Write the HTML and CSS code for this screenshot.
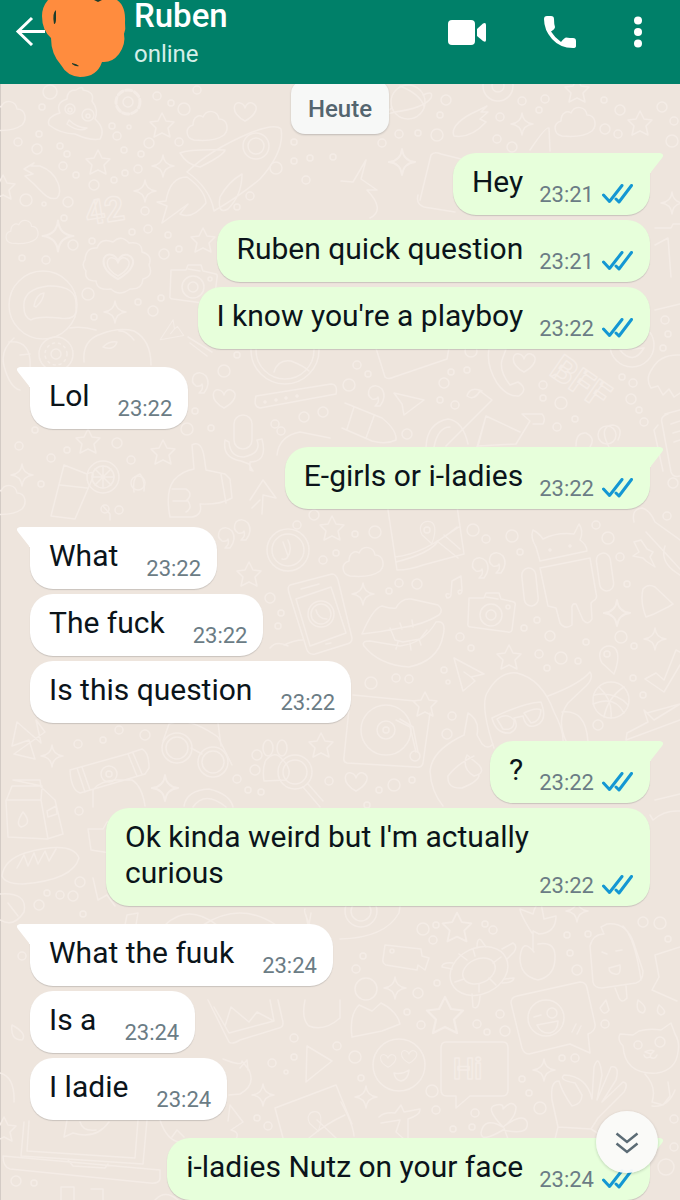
FILE: index.html
```html
<!DOCTYPE html>
<html lang="de">
<head>
	<meta charset="UTF-8">
	<meta name="viewport" content="width=device-width, initial-scale=1">
	<title>Chat</title>

	<link rel="stylesheet" href="styles.css">
</head>
<body>
	<svg class="sprite" aria-hidden="true">
		<defs>
			<symbol id="ticks" viewBox="0 0 31 20">
				<path d="M1.500 11L7.500 17.500L20 1.500M14 15L17 18L29.500 1.500" fill="none" stroke="currentColor" stroke-width="3" stroke-linejoin="round" stroke-linecap="round"/>
			</symbol>
			<path id="star" d="M0-12L4-4L12-3L6 3L8 12L0 8L-8 12L-6 3L-12-3L-4-4Z"/>
			<path id="spark" d="M0-11Q1-1 11 0Q1 1 0 11Q-1 1-11 0Q-1-1 0-11Z"/>
			<path id="cloud" d="M-13 14C-22 12-22 1-14-1C-14-9-8-12-4-9C0-18 11-15 12-7C21-7 22 4 17 9C9 15-2 15-13 14Z"/>
			<path id="heart" d="M0 9C-16 0-11-11-5-9Q-1-8 0-4Q2-10 7-9C15-6 11 3 0 9Z"/>
			<path id="plane" d="M-11-16L19 0L6 3L10 7L-2 17ZM6 3L-1-2"/>
			<g id="camera">
				<path d="M-22-15L-7-15L-5-20H8L10-14L23-11Q25-10 24-7L21 17Q20 20 17 19L-20 14Q-24 14-23 10L-22-15Z"/>
				<path d="M-5-16L7-14"/>
				<circle r="11" cx="0" cy="2"/><circle r="5" cx="0" cy="2"/><circle r="2" cx="17" cy="-6"/>
			</g>
			<path id="comma" d="M5 11Q12 2 7-6Q1-12-5-7Q-9 0-3 4Q2 5 3 2Q5 7 0 11Z"/>
			<path id="pin" d="M6 16L-6 5C-12-6-5-12 1-12C10-12 13-2 6 16Z"/>
			<g id="dots">
				<circle r="4" cx="0" cy="0"/><circle r="2" cx="14" cy="9"/><circle r="3" cx="22" cy="-6"/>
			</g>
		</defs>
	</svg>

	<div class="app">
		<header class="topbar">
			<button class="back" aria-label="Zurück">
				<svg width="30" height="30" viewBox="0 0 30 30" fill="none" stroke="currentColor" stroke-width="3"><path d="M30 15.500H3M17 2L3 15.500L17 29"/></svg>
			</button>
			<svg class="avatar" width="84" height="78" viewBox="0 0 84 78" aria-hidden="true">
				<path fill="#ff8c3e" d="M6 0H75Q84 6 83 23Q84 29 82 34Q84 44 77 54Q70 63 60 62Q55 77 38 77Q25 76 19 65Q9 54 9 38Q0 30 0 16Q0 7 6 0Z"/>
				<path fill="#1d3c2b" d="M14 10Q10 13 12 24Q14 24 14 19ZM52 0L56 2L60 0ZM30 64Q34 67 37 66Q35 64 30 63Z"/>
			</svg>
			<div class="contact">
				<h1 class="contact-name">Ruben</h1>
				<p class="contact-status">online</p>
			</div>
			<nav class="actions">
				<button class="action" aria-label="Videoanruf">
					<svg width="40" height="32" viewBox="0 0 40 32"><rect x="1" y="4" width="27" height="25" rx="4"/><path d="M30 13L36 7.500Q39 6 39 9V24Q39 27 36 25L30 20Z"/></svg>
				</button>
				<button class="action" aria-label="Anrufen">
					<svg width="34" height="34" viewBox="0 0 34 34"><path d="M4 1H8Q11 1 11 4Q11 9 12 12Q12 14 8 16.500Q12 23 18 27Q21 23 23 22.500Q27 23 30 23Q33 23 33 26V31Q33 33 30 33Q17 33 9 24Q1 15 1 4Q1 1 4 1Z"/></svg>
				</button>
				<button class="action" aria-label="Mehr">
					<svg width="10" height="32" viewBox="0 0 10 32"><circle cx="5" cy="4.500" r="4"/><circle cx="5" cy="16" r="4"/><circle cx="5" cy="27.500" r="4"/></svg>
				</button>
			</nav>
		</header>

		<main class="chat">
			<svg class="wallpaper" viewBox="0 84 680 1116" preserveAspectRatio="xMidYMin slice" aria-hidden="true">
				<!-- clouds -->
				<use href="#cloud" x="207" y="126"/><use href="#cloud" x="5" y="116"/><use href="#cloud" x="575" y="122"/>
				<use href="#cloud" x="363" y="562"/><use href="#cloud" transform="translate(22 232) scale(.8)"/>
				<use href="#cloud" x="5" y="500"/>

				<!-- stars -->
				<use href="#star" x="162" y="125"/><use href="#star" x="98" y="162"/><use href="#star" x="203" y="240"/>
				<use href="#star" x="640" y="123"/><use href="#star" x="577" y="90"/><use href="#star" x="3" y="187"/>
				<use href="#star" x="88" y="441"/><use href="#star" x="163" y="452"/><use href="#star" x="332" y="528"/>
				<use href="#star" x="249" y="574"/><use href="#star" x="509" y="657"/><use href="#star" x="425" y="704"/>
				<use href="#star" x="321" y="745"/><use href="#star" transform="translate(457 927) scale(1.200)"/>
				<use href="#star" transform="translate(445 1015) scale(1.500)"/><use href="#star" x="4" y="1129"/>

				<!-- sparkles -->
				<use href="#spark" x="163" y="166"/><use href="#spark" x="145" y="191"/><use href="#spark" transform="translate(58 236) scale(1.400)"/>
				<use href="#spark" x="115" y="312"/><use href="#spark" x="522" y="124"/><use href="#spark" transform="translate(402 162) scale(1.200)"/>
				<use href="#spark" x="22" y="475"/><use href="#spark" x="363" y="594"/><use href="#spark" transform="translate(617 613) scale(1.200)"/>
				<use href="#spark" x="655" y="639"/><use href="#spark" x="52" y="756"/><use href="#spark" transform="translate(165 788) scale(1.200)"/>
				<use href="#spark" x="395" y="988"/><use href="#spark" x="544" y="1070"/><use href="#spark" x="366" y="1097"/>
				<use href="#spark" x="577" y="911"/><use href="#spark" x="263" y="1095"/><use href="#spark" x="672" y="203"/>

				<!-- smiling heap, gear, nut -->
				<path d="M67 99Q67 90 76 90Q83 85 83 90Q95 92 92 101Q99 110 95 119Q106 129 100 139Q90 141 75 134Q61 134 49 125Q46 117 60 113Q55 103 67 99ZM69 120Q77 128 87 128Q79 133 67 124Z"/>
				<circle cx="70" cy="109" r="5"/><circle cx="88" cy="115" r="6"/><circle cx="70" cy="110" r="2"/><circle cx="88" cy="116" r="2"/>
				<circle cx="128" cy="102" r="12" stroke-width="3" stroke-dasharray="6 3"/><circle cx="128" cy="102" r="5"/>
				<path d="M24 169L34 163L31 166L40 166C59 173 63 193 57 198C49 201 43 193 34 184L25 176L33 174ZM454 136C450 127 463 117 477 111L487 106L481 112L488 112L480 119L486 122C476 133 466 138 454 136Z"/>
				<use href="#heart" x="245" y="112"/>

				<!-- rocket -->
				<path d="M187 172Q210 150 250 133Q275 123 281 129Q285 151 260 179Q240 196 214 211Q210 188 187 172ZM180 153Q190 149 225 150Q224 155 200 167Q187 165 180 153ZM242 174Q228 182 220 197Q217 215 228 209Q242 195 242 174ZM166 201Q170 177 187 177Q205 190 206 203Q192 220 180 214L188 204L162 223L167 206L157 202L166 201"/>
				<circle cx="256" cy="146" r="13"/><circle cx="256" cy="146" r="8"/>
				<text x="85" y="222" font-size="34" transform="rotate(-9 107 210)">42</text>

				<!-- planet and moon -->
				<circle cx="408" cy="102" r="17"/><path d="M392 108Q378 117 395 112Q424 108 431 98Q434 90 423 95M400 86Q420 94 424 106"/>
				<circle cx="498" cy="86" r="15"/><circle cx="498" cy="86" r="6"/>
				<path d="M341 181L353 182L366 160L361 179L377 190L367 190Q386 210 370 218M420 200L431 155Q434 151 441 154L465 160M418 195Q415 207 430 208L455 212M530 150Q546 126 549 128L550 151"/>

				<!-- badge -->
				<path d="M85 260Q86 247 97 248Q101 237 113 242Q121 234 129 243Q142 241 142 252Q153 255 149 265Q154 276 143 279Q142 290 130 289Q119 297 111 289Q97 291 96 281Q84 281 86 271Q81 265 85 260Z"/>
				<use href="#heart" x="118" y="267"/><use href="#heart" transform="translate(118 267) scale(1.350)"/>
				<use href="#camera" x="193" y="285"/>

				<!-- helmet and cookie -->
				<circle cx="43" cy="305" r="34"/><path d="M24 308Q22 289 48 286Q78 285 76 307Q78 321 59 318Q37 316 31 320Q24 317 24 308ZM34 306Q36 294 44 293Q43 301 36 307ZM14 338Q0 350 4 366Q10 388 20 390M70 328Q82 326 96 330M9 342Q32 340 30 368"/>
				<circle cx="56" cy="354" r="17"/><circle cx="56" cy="354" r="5"/><circle cx="56" cy="354" r="11" stroke-dasharray="2 4"/>
				<path d="M84 362Q82 340 101 334Q119 327 134 331Q151 340 151 365M103 347Q109 341 117 342Q114 351 103 347M119 331Q126 330 134 340"/>
				<use href="#plane" transform="translate(172 333) rotate(-85) scale(.7)"/>
				<path d="M188 337L212 352M190 343L207 356M20 355L30 354"/>

				<!-- face, tape, correction pen -->
				<circle cx="285" cy="350" r="34"/><circle cx="285" cy="350" r="29"/><path d="M274 372Q278 359 291 361Q304 366 309 371M256 396L331 384Q338 384 336 394L260 408Q253 407 256 396Z"/>
				<circle cx="265" cy="402" r="1"/><circle cx="276" cy="400" r="1"/><circle cx="286" cy="398" r="1"/><circle cx="297" cy="396" r="1"/>
				<use href="#comma" x="199" y="382"/><use href="#heart" x="224" y="399"/><use href="#comma" x="375" y="395"/>
				<path d="M375 345L385 377Q388 380 394 377L447 359L449 348M394 393L424 400L404 415L402 404ZM345 403L382 418Q397 430 396 440Q386 445 372 441L342 428M354 407L347 429M374 416L366 438"/>
				<path d="M489 349Q486 365 497 383Q507 397 519 396Q529 389 518 382L510 385Q499 371 502 360L506 349Z"/>
				<use href="#heart" x="524" y="363"/>
				<text x="548" y="374" font-size="36" transform="rotate(35 548 374)">BFF</text>
				<circle cx="632" cy="345" r="22"/><path d="M620 350Q633 366 644 348ZM680 355Q660 354 652 369Q645 379 651 388L658 386L663 395L669 389L674 397L680 393"/>

				<!-- bicycle -->
				<path d="M477 447L486 416L520 432M426 447Q427 423 448 419Q463 421 468 444M434 447Q438 427 450 427M446 446L492 400L480 391Q474 401 467 396Q470 386 482 391M486 416L478 446L516 444L530 421L522 414H542Q546 418 543 424L533 424M576 446Q576 432 586 433Q596 438 590 447M609 447Q598 426 613 425Q624 427 618 440"/>
				<path d="M665 414L680 410M668 414Q660 416 662 423L671 472Q673 478 680 476M658 425L654 430L663 471M671 424L680 421M673 433L680 431M674 442L680 440"/>

				<!-- microphone, drink, thumb -->
				<rect x="234" y="415" width="18" height="34" rx="9"/><path d="M229 442Q230 457 244 457Q262 453 257 440L262 439Q268 462 250 462V470L253 471L249 464L241 461Q222 458 225 440Z"/>
				<path d="M64 465L87 474Q94 470 93 477L75 519L51 516ZM60 485L87 488M103 506L110 514L110 520M134 492Q132 476 140 474Q145 480 144 491M170 517Q165 492 174 480Q182 471 194 469L192 445Q201 440 204 456L206 470L225 474L230 479L232 498Q220 505 200 504Q203 515 192 517ZM221 474L226 503M172 489H186Q194 494 186 501H173M174 501H188Q193 508 186 512"/>
				<circle cx="103" cy="477" r="16"/><circle cx="103" cy="477" r="11"/><path d="M103 466V488M92 477H114M95 469L111 485M111 469L95 485"/>
				<circle cx="138" cy="483" r="7"/><path d="M250 500L263 480L276 498L263 495L262 514M277 455Q279 436 300 432L330 438"/>

				<!-- clock and phone -->
				<circle cx="288" cy="550" r="21"/><circle cx="288" cy="550" r="16"/><path d="M283 542L288 556Q287 560 282 559M288 540Q293 550 287 558M252 508L260 500"/>
				<use href="#comma" x="225" y="537"/><use href="#comma" x="241" y="529"/>
				<path d="M290 585L332 574Q336 574 338 580L352 638Q352 643 347 644L315 654Q309 655 307 650L289 593Q287 587 290 585ZM296 599L331 587L346 633L310 646ZM301 589L319 584M326 644L331 643"/>
				<circle cx="321" cy="614" r="13"/><circle cx="321" cy="614" r="10"/><path d="M316 610Q318 619 327 619M303 640Q295 640 284 645M270 648Q276 640 288 646"/>

				<!-- map and lips -->
				<path d="M387 503L397 570Q410 570 423 565L464 554L457 506M395 557Q424 554 457 527M396 562Q431 553 438 541L459 527M437 541L458 558M444 535L460 549"/>
				<use href="#pin" transform="translate(427 531) scale(.8)"/><circle cx="427" cy="530" r="3"/>
				<path d="M362 634Q373 608 382 606Q391 609 396 608Q401 598 411 599L438 605Q444 610 439 615Q423 625 400 628Q381 632 362 634ZM364 646Q361 641 370 641L400 646Q424 643 436 622Q447 620 443 636Q438 661 409 667Q379 665 364 646ZM390 628L395 640L403 642L420 639L427 630M400 623L402 629M412 620L413 627M398 642L396 649M410 643L411 650M419 639L421 645"/>
				<path d="M452 581L461 576L462 590M452 581L451 594M449 594Q444 593 447 598Q451 598 451 594M462 590Q456 590 459 594Q462 594 462 590"/>
				<use href="#comma" x="479" y="567"/><use href="#comma" x="496" y="562"/>
				<use href="#camera" x="491" y="613"/><use href="#plane" x="465" y="674"/>

				<!-- robot -->
				<path d="M540 561L536 547Q530 537 533 530Q539 533 543 539Q557 532 574 534L579 524Q584 531 580 540Q587 545 587 551ZM540 568L590 558L596 593Q598 599 593 601L591 603L592 619Q588 626 583 620L576 604Q571 603 572 610L572 625Q565 630 560 623L556 608L548 606Z"/>
				<rect x="523" y="568" width="14" height="38" rx="7" transform="rotate(-6 530 587)"/><rect x="598" y="553" width="14" height="38" rx="7" transform="rotate(-8 605 572)"/>
				<circle cx="550" cy="550" r="1"/><circle cx="570" cy="546" r="1"/>
				<path d="M634 542L641 540L647 549L653 552L650 557L655 567L646 561L643 558L633 556L639 552ZM643 589Q648 583 655 587L673 604L668 607L654 614L646 617Q640 602 643 589ZM634 522Q631 509 642 508Q650 510 655 522L680 540M646 532L680 569M665 546Q659 563 680 575"/>
				<use href="#pin" x="608" y="658"/><circle cx="607" cy="654" r="3"/>
				<path d="M645 679L656 673L664 680L676 650L680 652M645 679L664 692L680 665"/>

				<!-- record player, hooded figure, ball -->
				<path d="M353 695L415 701M430 713L423 763Q422 768 416 767L347 763Q343 762 344 757L350 699"/>
				<circle cx="386" cy="730" r="25"/><circle cx="386" cy="730" r="9"/><circle cx="386" cy="730" r="3"/><path d="M396 720L410 727L416 752M400 719L413 727L418 752"/><circle cx="415" cy="756" r="5"/>
				<path d="M494 748Q480 706 487 693Q499 671 517 673Q542 679 554 712Q564 731 563 742M492 718Q523 703 541 702Q548 720 537 725Q526 730 523 716L514 718Q520 728 510 733Q496 734 492 718ZM497 719Q507 712 514 720Q515 731 503 729ZM524 713Q536 707 541 710Q540 722 531 723ZM548 696Q580 684 590 672Q594 678 586 686L568 703Q556 719 566 741M562 712Q586 709 588 742M468 713Q480 720 477 735L482 744Q488 750 493 744M468 713L464 735Q432 750 430 771Q431 791 443 806M474 756Q457 764 448 776Q447 789 462 788Q479 781 479 775M467 755Q461 768 474 776Q486 773 479 765Z"/>
				<circle cx="611" cy="700" r="18"/><path d="M599 687Q613 700 611 718M624 687Q608 697 604 717M594 695Q615 691 628 705M593 704Q615 695 624 713M644 710L654 720L680 704M644 710L648 722L627 733L626 740L680 720M647 713L680 704"/>
				<use href="#heart" x="356" y="782"/>

				<!-- camera roll, milk carton, glasses, paw -->
				<path d="M70 770L127 754L142 749Q149 752 149 768L145 774L80 793Q71 790 70 770ZM77 768L85 792M82 767L90 790M128 754L137 776M133 753L142 774M93 807V790Q99 781 116 780H132Q142 786 145 806M88 829H103L107 822L131 821M88 829L91 850L110 853"/>
				<circle cx="109" cy="774" r="8"/><circle cx="109" cy="774" r="3"/>
				<path d="M13 780H40L41 787L55 800L63 834L47 839L8 837L6 801L12 786H42ZM6 800H41L48 839M41 800L42 787M23 812Q33 824 21 827Q15 824 23 812ZM47 811L56 806L57 814L48 817ZM17 722L41 743L36 720L45 732L14 754L35 759L29 740L12 746Z"/>
				<circle cx="177" cy="748" r="15"/><circle cx="177" cy="748" r="11"/><circle cx="213" cy="762" r="15"/><circle cx="213" cy="762" r="11"/><path d="M191 748L202 754M163 741L169 724Q187 715 218 737L232 765M218 723L221 746"/>
				<path d="M266 760Q275 750 282 759Q294 771 286 780L264 781Q262 768 266 760ZM303 787L320 807M308 784L323 801"/>
				<circle cx="295" cy="772" r="17"/><circle cx="295" cy="772" r="12"/><ellipse cx="268" cy="748" rx="5" ry="8"/><ellipse cx="282" cy="748" rx="5" ry="8"/><circle cx="257" cy="755" r="5"/><circle cx="255" cy="770" r="5"/>
				<path d="M184 806Q187 790 209 789Q230 794 233 807M193 807Q205 790 226 807M2 876Q4 860 25 853Q72 840 79 858Q73 880 23 884Q5 884 2 876ZM17 868L24 855L28 866L34 853L38 864L45 851L49 861L56 849M93 878L98 900L107 895L115 906M0 894Q28 892 24 912Q14 928 0 920M8 903L18 916M125 925L127 915L138 913L136 925M165 925Q188 903 217 925M203 925Q240 901 276 925M306 915L308 925M311 913L309 925M310 925Q303 911 305 909"/>

				<!-- vinyl edge, label, turtle, sprout -->
				<path d="M340 939Q385 938 399 913L400 906M385 945L421 949L422 956L429 958L425 970L418 965L417 970L386 965Q382 963 383 959Z"/>
				<circle cx="361" cy="911" r="16"/><circle cx="361" cy="911" r="10"/><circle cx="392" cy="951" r="2"/>
				<ellipse cx="479" cy="971" rx="30" ry="23" transform="rotate(-25 479 971)"/><ellipse cx="479" cy="971" rx="17" ry="12" transform="rotate(-25 479 971)"/>
				<path d="M477 948Q477 937 481 940L486 947M502 949L513 943Q518 946 514 952L507 959M452 969L442 967Q442 962 453 963M504 979L514 978Q513 983 502 983M472 994L473 1007Q479 1011 480 996M467 960L459 954M475 956L473 949M493 963L501 957M489 978L496 985M479 984L479 992M464 979L455 982"/>
				<path d="M532 933Q520 914 520 909L533 914Q536 902 541 903L544 919L556 916Q556 933 539 934L533 931V951M534 952Q522 937 520 958Q520 976 538 980Q556 976 555 955Q554 941 538 944"/>

				<!-- ice cream, sticker bubble, greeting -->
				<path d="M593 982L590 946Q593 934 604 934L601 927L607 924Q627 922 634 944L643 971Q643 981 636 983L602 988Q594 988 593 982ZM623 926Q635 938 641 980M615 988L619 998Q622 1004 627 998L626 986M609 968L620 965Q621 976 615 974Q609 973 609 968M602 952L607 954M616 951L622 950"/>
				<path d="M517 996L580 982Q586 982 587 988L595 1024Q596 1031 588 1034L590 1053L570 1044L529 1054Q524 1054 522 1048L511 1003Q511 997 517 996Z"/><circle cx="546" cy="1018" r="18"/><circle cx="552" cy="1013" r="5"/><path d="M534 1017L541 1015M537 1025L558 1021Q558 1031 550 1033Q541 1034 537 1025M572 1032L576 1024M577 1034L581 1026"/>
				<path d="M446 1042H503Q508 1042 508 1048V1090Q508 1096 502 1096H470L456 1108V1096H447Q441 1096 441 1090V1048Q441 1042 446 1042Z"/><text x="453" y="1079" font-size="30">Hi</text>
				<circle cx="399" cy="1065" r="26"/><use href="#heart" transform="translate(388 1061) scale(.7)"/><use href="#heart" transform="translate(409 1057) scale(.7)"/><path d="M394 1073Q402 1075 409 1070Q408 1080 401 1081Q395 1080 394 1073Z"/>
				<circle cx="366" cy="989" r="11"/><path d="M352 1037Q349 1015 359 1005L372 1011L381 1003Q397 1011 400 1024L382 1031Z"/>

				<!-- panda and hand -->
				<path d="M623 1046Q617 1040 620 1034L633 1035L639 1031Q650 1028 661 1030L671 1023L675 1034Q680 1042 678 1052Q676 1070 657 1073Q625 1075 623 1046ZM645 1074Q657 1087 652 1102L663 1105L670 1096L668 1082M675 1090Q668 1108 652 1106"/><circle cx="638" cy="1045" r="4"/><circle cx="660" cy="1042" r="5"/><path d="M645 1052Q650 1049 654 1051L651 1054ZM651 1054L650 1057Q655 1060 657 1055M650 1057Q645 1059 644 1055"/>
				<path d="M558 1127L552 1100Q550 1081 559 1081Q562 1092 572 1106Q582 1104 582 1095L575 1083Q558 1080 564 1075Q587 1076 592 1099L594 1067Q599 1052 602 1075L597 1100L611 1067Q620 1065 616 1080L602 1102L623 1082Q629 1083 624 1092L598 1118L591 1129ZM558 1127L555 1139M591 1129L599 1134"/>
				<path d="M606 1000L609 1010Q604 1017 600 1008ZM638 1000Q649 1008 643 1013Q635 1012 638 1000M659 1005Q669 1013 661 1015Q655 1013 659 1005M655 955L680 947M655 955L659 977L652 990L677 1001"/>

				<!-- clover, aeroplane, devil, picture, map, laptop -->
				<path d="M503 1127Q484 1107 496 1105Q504 1103 503 1109Q512 1099 516 1107Q516 1118 503 1127Q523 1112 527 1122Q530 1136 503 1130Q481 1143 481 1133Q484 1116 503 1127M504 1128L508 1139M379 1117Q384 1112 395 1113L401 1105L404 1112L420 1109Q421 1115 408 1119L408 1139M381 1123L400 1120L396 1132L404 1139"/>
				<path d="M208 1000L229 1042Q232 1045 240 1040L279 1028Q285 1027 282 1018L278 1000M214 1007L229 1033L274 1021L270 1000M225 1026L231 1007L249 1022L257 1012L272 1020M305 1000Q301 1019 309 1026Q324 1032 340 1018L340 1000M223 1059Q243 1067 242 1061L249 1070Q256 1085 240 1094L229 1095M240 1068L247 1060L248 1070M307 1046L332 1061L322 1069L306 1082ZM275 1108L336 1085L352 1124M275 1108L283 1138M317 1120L336 1138M309 1138Q327 1123 345 1115M12 1025Q28 1034 22 1040Q10 1040 12 1025"/>
				<path d="M24 1122L21 1156L143 1164L147 1120M29 1121L27 1151L135 1158L138 1120M3 1156L160 1170V1178Q160 1184 150 1183L10 1169Q3 1167 3 1156ZM68 1160L73 1166L105 1168L108 1164M67 1120L64 1137L73 1133Q96 1140 109 1122M80 1122Q83 1132 96 1130M61 1187V1200M61 1187H74V1200M91 1189H103V1200M155 1200Q165 1189 178 1200M160 1120Q167 1141 180 1142M172 1137L177 1130L184 1137M228 1121L230 1105L243 1122L231 1130Q240 1132 236 1139"/>
				<use href="#pin" transform="translate(314 1120) scale(.7)"/>
				<path d="M0 1073Q15 1077 14 1102M341 1102Q353 1124 354 1136M655 310L680 304M655 245L668 238L671 277M655 228H671L673 224H680M655 800L680 794M650 815L653 820Q664 810 680 811"/>

				<!-- loose rings -->
				<circle cx="50" cy="92" r="7"/><circle cx="42" cy="107" r="3"/><circle cx="171" cy="103" r="3"/><circle cx="184" cy="109" r="6"/><circle cx="157" cy="96" r="4"/><circle cx="197" cy="90" r="4"/>
				<circle cx="112" cy="126" r="3"/><circle cx="117" cy="136" r="4"/><circle cx="129" cy="127" r="2"/><circle cx="149" cy="143" r="5"/><circle cx="179" cy="142" r="4"/><circle cx="124" cy="150" r="3"/><circle cx="141" cy="154" r="3"/>
				<circle cx="37" cy="149" r="5"/><circle cx="60" cy="146" r="3"/><circle cx="67" cy="154" r="3"/><circle cx="39" cy="134" r="3"/><circle cx="18" cy="142" r="4"/><circle cx="63" cy="166" r="4"/><circle cx="76" cy="175" r="3"/><circle cx="94" cy="185" r="5"/>
				<circle cx="26" cy="200" r="6"/><circle cx="44" cy="204" r="2"/><circle cx="68" cy="202" r="5"/><circle cx="64" cy="218" r="3"/><circle cx="138" cy="169" r="4"/><circle cx="114" cy="180" r="3"/><circle cx="125" cy="173" r="3"/>
				<circle cx="145" cy="211" r="4"/><circle cx="148" cy="229" r="4"/><circle cx="132" cy="232" r="3"/><circle cx="168" cy="235" r="3"/><circle cx="73" cy="245" r="5"/><circle cx="92" cy="241" r="3"/><circle cx="46" cy="260" r="4"/><circle cx="22" cy="258" r="3"/>
				<circle cx="164" cy="254" r="5"/><circle cx="179" cy="249" r="3"/><circle cx="88" cy="294" r="6"/><circle cx="153" cy="311" r="5"/><circle cx="138" cy="302" r="3"/><circle cx="94" cy="317" r="3"/><circle cx="161" cy="298" r="3"/>
				<circle cx="276" cy="168" r="6"/><circle cx="294" cy="161" r="3"/><circle cx="310" cy="158" r="3"/><circle cx="333" cy="157" r="3"/><circle cx="294" cy="142" r="3"/><circle cx="306" cy="180" r="4"/><circle cx="250" cy="196" r="4"/><circle cx="237" cy="207" r="3"/>
				<circle cx="446" cy="100" r="5"/><circle cx="437" cy="135" r="6"/><circle cx="399" cy="134" r="4"/><circle cx="418" cy="133" r="3"/><circle cx="382" cy="143" r="4"/><circle cx="440" cy="115" r="3"/><circle cx="500" cy="117" r="4"/><circle cx="522" cy="101" r="4"/><circle cx="545" cy="99" r="4"/><circle cx="539" cy="110" r="3"/>
				<circle cx="620" cy="110" r="5"/><circle cx="605" cy="129" r="5"/><circle cx="618" cy="134" r="4"/><circle cx="662" cy="107" r="5"/><circle cx="604" cy="100" r="3"/><circle cx="672" cy="141" r="6"/><circle cx="674" cy="121" r="4"/><circle cx="497" cy="139" r="4"/><circle cx="512" cy="147" r="5"/>
				<circle cx="665" cy="320" r="4"/><circle cx="668" cy="334" r="3"/><circle cx="663" cy="348" r="3"/><circle cx="224" cy="371" r="6"/><circle cx="237" cy="355" r="3"/><circle cx="195" cy="411" r="3"/><circle cx="187" cy="429" r="6"/><circle cx="211" cy="428" r="3"/>
				<circle cx="349" cy="385" r="6"/><circle cx="357" cy="365" r="4"/><circle cx="368" cy="374" r="3"/><circle cx="444" cy="383" r="5"/><circle cx="451" cy="372" r="3"/><circle cx="467" cy="370" r="3"/><circle cx="471" cy="351" r="6"/><circle cx="407" cy="434" r="5"/><circle cx="440" cy="400" r="3"/><circle cx="455" cy="405" r="4"/>
				<circle cx="543" cy="385" r="4"/><circle cx="561" cy="403" r="6"/><circle cx="543" cy="398" r="3"/><circle cx="557" cy="427" r="4"/><circle cx="575" cy="419" r="3"/><circle cx="631" cy="399" r="5"/><circle cx="633" cy="383" r="4"/><circle cx="639" cy="410" r="3"/><circle cx="622" cy="377" r="3"/><circle cx="644" cy="422" r="4"/><circle cx="607" cy="435" r="9"/>
				<circle cx="275" cy="424" r="4"/><circle cx="281" cy="431" r="4"/><circle cx="304" cy="417" r="5"/><circle cx="323" cy="412" r="5"/><circle cx="19" cy="446" r="4"/><circle cx="35" cy="430" r="3"/><circle cx="67" cy="450" r="3"/><circle cx="51" cy="458" r="4"/><circle cx="117" cy="443" r="5"/><circle cx="131" cy="460" r="4"/><circle cx="105" cy="509" r="4"/><circle cx="119" cy="510" r="4"/><circle cx="41" cy="484" r="3"/>
				<circle cx="375" cy="532" r="6"/><circle cx="355" cy="534" r="3"/><circle cx="314" cy="515" r="5"/><circle cx="297" cy="525" r="4"/><circle cx="323" cy="560" r="4"/><circle cx="336" cy="553" r="3"/><circle cx="270" cy="598" r="5"/><circle cx="281" cy="613" r="3"/><circle cx="278" cy="626" r="3"/><circle cx="417" cy="584" r="5"/><circle cx="399" cy="583" r="4"/><circle cx="389" cy="591" r="3"/>
				<circle cx="473" cy="530" r="6"/><circle cx="486" cy="539" r="4"/><circle cx="512" cy="536" r="6"/><circle cx="520" cy="552" r="3"/><circle cx="608" cy="538" r="6"/><circle cx="596" cy="525" r="4"/><circle cx="620" cy="557" r="4"/><circle cx="627" cy="584" r="3"/><circle cx="537" cy="620" r="3"/><circle cx="524" cy="628" r="3"/><circle cx="550" cy="636" r="5"/><circle cx="586" cy="642" r="3"/><circle cx="621" cy="637" r="6"/><circle cx="634" cy="646" r="3"/>
				<circle cx="460" cy="637" r="4"/><circle cx="471" cy="648" r="3"/><circle cx="539" cy="654" r="4"/><circle cx="561" cy="658" r="6"/><circle cx="578" cy="661" r="3"/><circle cx="547" cy="668" r="3"/><circle cx="371" cy="683" r="6"/><circle cx="396" cy="678" r="4"/><circle cx="409" cy="679" r="4"/><circle cx="444" cy="670" r="3"/><circle cx="448" cy="682" r="2"/><circle cx="452" cy="716" r="4"/><circle cx="447" cy="734" r="5"/><circle cx="598" cy="725" r="5"/><circle cx="633" cy="678" r="3"/><circle cx="643" cy="695" r="3"/>
				<circle cx="394" cy="785" r="6"/><circle cx="379" cy="790" r="3"/><circle cx="412" cy="780" r="3"/><circle cx="367" cy="805" r="3"/><circle cx="78" cy="744" r="4"/><circle cx="103" cy="740" r="3"/><circle cx="145" cy="735" r="5"/><circle cx="119" cy="730" r="4"/><circle cx="237" cy="779" r="4"/><circle cx="248" cy="790" r="3"/><circle cx="261" cy="792" r="3"/><circle cx="329" cy="781" r="4"/><circle cx="79" cy="811" r="4"/>
				<circle cx="39" cy="905" r="5"/><circle cx="47" cy="893" r="3"/><circle cx="60" cy="895" r="4"/><circle cx="73" cy="896" r="5"/><circle cx="83" cy="914" r="3"/><circle cx="80" cy="882" r="5"/><circle cx="22" cy="956" r="4"/><circle cx="423" cy="929" r="6"/><circle cx="436" cy="925" r="3"/><circle cx="433" cy="940" r="4"/><circle cx="485" cy="924" r="3"/><circle cx="493" cy="930" r="4"/><circle cx="363" cy="956" r="3"/><circle cx="356" cy="969" r="4"/><circle cx="577" cy="970" r="5"/><circle cx="570" cy="953" r="3"/><circle cx="567" cy="935" r="3"/><circle cx="588" cy="934" r="3"/><circle cx="643" cy="922" r="5"/><circle cx="660" cy="923" r="6"/><circle cx="668" cy="939" r="3"/>
				<circle cx="418" cy="993" r="5"/><circle cx="437" cy="983" r="3"/><circle cx="407" cy="1012" r="3"/><circle cx="421" cy="1025" r="4"/><circle cx="477" cy="1024" r="4"/><circle cx="505" cy="1031" r="5"/><circle cx="487" cy="1032" r="3"/><circle cx="500" cy="1014" r="4"/><circle cx="355" cy="1057" r="6"/><circle cx="361" cy="1078" r="3"/><circle cx="432" cy="1091" r="6"/><circle cx="436" cy="1110" r="4"/><circle cx="453" cy="1129" r="3"/><circle cx="475" cy="1113" r="4"/><circle cx="472" cy="1127" r="3"/><circle cx="540" cy="1108" r="6"/><circle cx="529" cy="1093" r="3"/><circle cx="522" cy="1079" r="3"/><circle cx="562" cy="1058" r="3"/><circle cx="575" cy="1058" r="4"/><circle cx="605" cy="1024" r="4"/>
				<use href="#dots" x="272" y="1063"/><circle cx="294" cy="1038" r="4"/><circle cx="337" cy="1046" r="4"/><circle cx="257" cy="1118" r="3"/><circle cx="268" cy="1126" r="4"/><circle cx="16" cy="1181" r="5"/><circle cx="34" cy="1183" r="3"/><circle cx="674" cy="1119" r="4"/><circle cx="674" cy="1147" r="4"/><circle cx="666" cy="1167" r="8"/><circle cx="673" cy="483" r="5"/><circle cx="667" cy="516" r="4"/>
			</svg>

			<div class="thread">
				<div class="date">Heute</div>

				<div class="message sent tail">
					<p class="text">Hey</p>
					<span class="meta"><time>23:21</time><svg class="ticks" role="img" aria-label="Gelesen"><use href="#ticks"/></svg></span>
				</div>
				<div class="message sent">
					<p class="text">Ruben quick question</p>
					<span class="meta"><time>23:21</time><svg class="ticks" role="img" aria-label="Gelesen"><use href="#ticks"/></svg></span>
				</div>
				<div class="message sent">
					<p class="text">I know you're a playboy</p>
					<span class="meta"><time>23:22</time><svg class="ticks" role="img" aria-label="Gelesen"><use href="#ticks"/></svg></span>
				</div>

				<div class="message received tail">
					<p class="text">Lol</p>
					<span class="meta"><time>23:22</time></span>
				</div>

				<div class="message sent tail">
					<p class="text">E-girls or i-ladies</p>
					<span class="meta"><time>23:22</time><svg class="ticks" role="img" aria-label="Gelesen"><use href="#ticks"/></svg></span>
				</div>

				<div class="message received tail">
					<p class="text">What</p>
					<span class="meta"><time>23:22</time></span>
				</div>
				<div class="message received">
					<p class="text">The fuck</p>
					<span class="meta"><time>23:22</time></span>
				</div>
				<div class="message received">
					<p class="text">Is this question</p>
					<span class="meta"><time>23:22</time></span>
				</div>

				<div class="message sent tail">
					<p class="text">?</p>
					<span class="meta"><time>23:22</time><svg class="ticks" role="img" aria-label="Gelesen"><use href="#ticks"/></svg></span>
				</div>
				<div class="message sent long">
					<p class="text">Ok kinda weird but I'm actually curious</p>
					<span class="meta"><time>23:22</time><svg class="ticks" role="img" aria-label="Gelesen"><use href="#ticks"/></svg></span>
				</div>

				<div class="message received tail">
					<p class="text">What the fuuk</p>
					<span class="meta"><time>23:24</time></span>
				</div>
				<div class="message received">
					<p class="text">Is a</p>
					<span class="meta"><time>23:24</time></span>
				</div>
				<div class="message received">
					<p class="text">I ladie</p>
					<span class="meta"><time>23:24</time></span>
				</div>

				<div class="message sent tail">
					<p class="text">i-ladies Nutz on your face</p>
					<span class="meta"><time>23:24</time><svg class="ticks" role="img" aria-label="Gelesen"><use href="#ticks"/></svg></span>
				</div>
			</div>

			<button class="scroll-down" aria-label="Nach unten">
				<svg width="24" height="22" viewBox="0 0 24 22" fill="none" stroke="currentColor" stroke-width="2.500"><path d="M1.500 1.500L12 10L22.500 1.500M1.500 11.500L12 20L22.500 11.500"/></svg>
			</button>
		</main>
	</div>
</body>
</html>
```
FILE: styles.css
```css
* {
	box-sizing: border-box;
}

body {
	margin: 0;
	font-family: Roboto, "Liberation Sans", sans-serif;
	color: #0b141a;
}

button {
	padding: 0;
	border: 0;
	background: none;
	color: inherit;
	cursor: pointer;
}

svg {
	display: block;
}

.sprite {
	position: absolute;
	width: 0;
	height: 0;
}

.app {
	display: flex;
	flex-direction: column;
	height: 100vh;
}

/* Header */
.topbar {
	display: flex;
	align-items: flex-start;
	height: 84px;
	padding: 0 37px 0 15px;
	background-color: #008069;
	color: #fff;
}

.back {
	display: flex;
	align-items: center;
	height: 62px;
}

.avatar {
	margin-left: -3px;
}

.contact {
	flex-grow: 1;
	margin-left: 8px;
}

.contact-name {
	margin: 0 0 8px;
	font-size: 33px;
	font-weight: 500;
	line-height: 32px;
}

.contact-status {
	margin: 0;
	font-size: 24px;
	line-height: 28px;
	color: #d6efe9;
}

.actions {
	display: flex;
	gap: 56px;
	height: 64px;
}

.action {
	display: flex;
	align-items: center;
}

.action svg {
	fill: currentColor;
}

/* Chat */
.chat {
	position: relative;
	flex: 1;
	min-height: 0;
	overflow: hidden;
	background-color: #eee5dd;
	box-shadow: inset 1px 0 0 #d3cbc5;
}

.wallpaper {
	position: absolute;
	top: 0;
	left: 0;
	width: 100%;
	height: 100%;
	fill: none;
	stroke: #f4ece6;
	stroke-width: 1.5;
	stroke-linejoin: round;
	stroke-linecap: round;
}

.wallpaper text {
	font-weight: 700;
}

.thread {
	position: relative;
	display: flex;
	flex-direction: column;
	align-items: flex-start;
	gap: 5px;
	padding: 0 30px;
}

.date {
	align-self: center;
	margin-top: -4px;
	margin-bottom: 1px;
	padding: 15px 17px 11px;
	border-radius: 14px;
	background-color: #f7f8f7;
	box-shadow: 0 1px 2px rgba(11, 20, 26, .2);
	color: #54656f;
	font-size: 24px;
	font-weight: 500;
	line-height: 28px;
}

.message {
	position: relative;
	display: flex;
	align-items: flex-end;
	max-width: 544px;
	padding: 11px 16px 9px 19px;
	border-radius: 23px;
	background-color: #fff;
	box-shadow: 0 1px 1px rgba(11, 20, 26, .16);
}

.sent {
	align-self: flex-end;
	gap: 16px;
	padding-right: 17px;
	background-color: #e7ffdb;
}

.received {
	gap: 28px;
}

.long {
	gap: 8px;
}

.tail {
	margin-top: 13px;
}

.tail::after {
	content: "";
	position: absolute;
	top: 0;
	width: 14px;
	height: 20px;
	background-color: inherit;
	clip-path: path("M0 0H10Q15 1 12 5L1 19V20H0Z");
}

.sent.tail {
	border-top-right-radius: 0;
}

.sent.tail::after {
	left: 100%;
}

.received.tail {
	border-top-left-radius: 0;
}

.received.tail::after {
	right: 100%;
	transform: scaleX(-1);
}

.text {
	margin: 0 0 6px;
	font-size: 30px;
	line-height: 36px;
}

.meta {
	display: flex;
	align-items: flex-start;
	gap: 8px;
	color: #6b7c85;
	font-size: 22px;
	line-height: 22px;
}

.ticks {
	width: 31px;
	height: 20px;
	color: #1497d3;
}

.scroll-down {
	position: absolute;
	right: 22px;
	bottom: 27px;
	display: flex;
	align-items: center;
	justify-content: center;
	width: 62px;
	height: 62px;
	padding-top: 2px;
	border-radius: 50%;
	background-color: rgba(250, 250, 249, .97);
	box-shadow: 0 1px 3px rgba(11, 20, 26, .2);
	color: #5b6b75;
}
```
